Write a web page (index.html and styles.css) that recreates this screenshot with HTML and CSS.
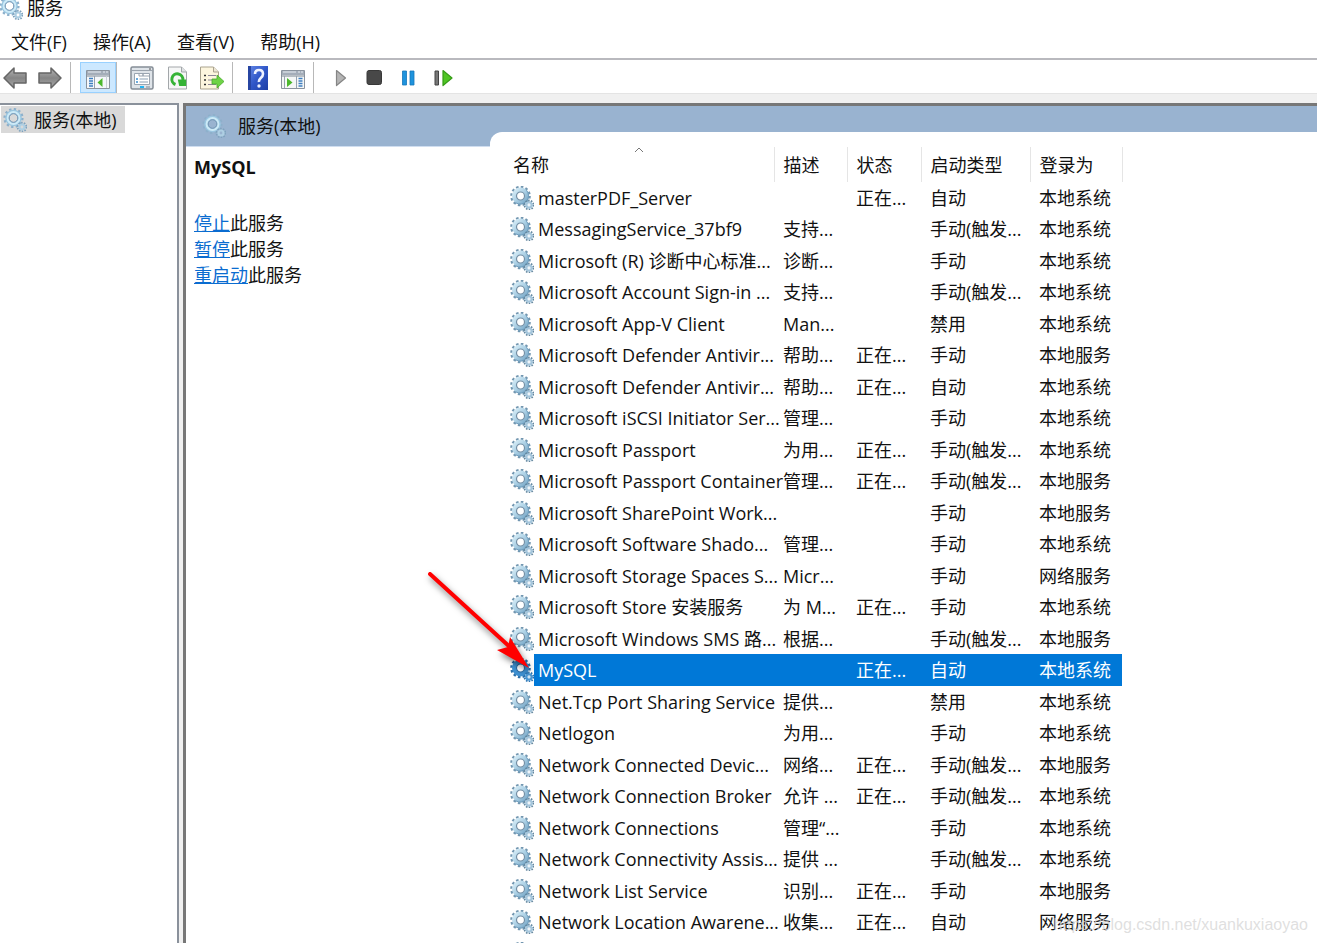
FILE: index.html
```html
<!DOCTYPE html>
<html lang="zh-CN">
<head>
<meta charset="utf-8">
<title>服务</title>
<link rel="stylesheet" href="styles.css">
</head>
<body>
<svg class="defs" aria-hidden="true">
  <defs>
    <linearGradient id="steel" x1="0" y1="0" x2="1" y2="1"><stop offset="0" stop-color="#d3eaf5"/><stop offset=".5" stop-color="#aacfe4"/><stop offset="1" stop-color="#7aa9c8"/></linearGradient>
    <linearGradient id="ash" x1="0" y1="0" x2="0" y2="1"><stop offset="0" stop-color="#b5b5b5"/><stop offset=".5" stop-color="#858585"/><stop offset="1" stop-color="#aaa"/></linearGradient>
    <linearGradient id="navy" x1="0" y1="0" x2="1" y2="1"><stop offset="0" stop-color="#6488e6"/><stop offset=".5" stop-color="#3057c8"/><stop offset="1" stop-color="#1d3fa4"/></linearGradient>
  </defs>
  <symbol id="gear" viewBox="0 0 24 24">
    <circle cx="10.500" cy="10" r="9" fill="none" stroke="#7296b0" stroke-width="2.600" stroke-dasharray="2.500 2.212"/>
    <circle cx="10.500" cy="10" r="6" fill="none" stroke="url(#steel)" stroke-width="5"/>
    <path d="M16.500 4.200a8.400 8.400 0 0 1-11 12.500" fill="none" stroke="#6f9dbd" stroke-width="1"/>
    <circle cx="10.500" cy="10" r="4" fill="#fff" stroke="#7590a6" stroke-width="1.200"/>
    <circle cx="19" cy="19" r="4.400" fill="none" stroke="#64879f" stroke-width="2" stroke-dasharray="1.500 1.264"/>
    <circle cx="19" cy="19" r="2.600" fill="none" stroke="#a5c6dc" stroke-width="2.400"/>
    <circle cx="19" cy="19" r="1.300" fill="#eef5fa"/>
  </symbol>
  <symbol id="gear-soft" viewBox="0 0 24 24">
    <circle cx="10.500" cy="10" r="8.800" fill="none" stroke="#8db0cb" stroke-width="2.600" stroke-dasharray="2.300 2.308"/>
    <circle cx="10.500" cy="10" r="6.300" fill="none" stroke="#9ac6e0" stroke-width="4"/>
    <circle cx="10.500" cy="10" r="5.900" fill="none" stroke="#cdeaf7" stroke-width="2"/>
    <circle cx="10.500" cy="10" r="4.300" fill="none" stroke="#7494b2" stroke-width="1"/>
    <circle cx="19" cy="19" r="4.300" fill="none" stroke="#7fa3be" stroke-width="2" stroke-dasharray="1.500 1.202"/>
    <circle cx="19" cy="19" r="2.500" fill="none" stroke="#aecfe3" stroke-width="2.200"/>
  </symbol>
  <symbol id="gear-selected" viewBox="0 0 24 24">
    <circle cx="10.500" cy="10" r="9" fill="none" stroke="#2a6ea8" stroke-width="2.600" stroke-dasharray="2.500 2.212"/>
    <circle cx="10.500" cy="10" r="6" fill="none" stroke="#3e8fcf" stroke-width="5"/>
    <circle cx="10.500" cy="10" r="4" fill="#fff" stroke="#2b6ca5" stroke-width="1.200"/>
    <circle cx="19" cy="19" r="4.400" fill="none" stroke="#2c74b2" stroke-width="2" stroke-dasharray="1.500 1.264"/>
    <circle cx="19" cy="19" r="2.600" fill="none" stroke="#4a97d3" stroke-width="2.400"/>
    <circle cx="19" cy="19" r="1.300" fill="#cfe4f4"/>
  </symbol>
</svg>

<header class="titlebar"><svg class="gear"><use href="#gear-soft"/></svg><span>服务</span></header>

<nav class="menubar">
  <button type="button">文件(F)</button>
  <button type="button">操作(A)</button>
  <button type="button">查看(V)</button>
  <button type="button">帮助(H)</button>
</nav>

<div class="toolbar" role="toolbar" aria-label="工具栏">
  <div class="group nav">
    <button type="button" aria-label="后退"><svg viewBox="0 0 24 24"><path d="M1 12 11 2v5h12v10H11v5z" fill="url(#ash)" stroke="#666" stroke-width="1.500" stroke-linejoin="round"/></svg></button>
    <button type="button" aria-label="前进"><svg viewBox="0 0 24 24"><path d="M23 12 13 2v5H1v10h12v5z" fill="url(#ash)" stroke="#666" stroke-width="1.500" stroke-linejoin="round"/></svg></button>
  </div>
  <div class="group tree-toggle">
    <button type="button" class="on" aria-label="显示控制台树" aria-pressed="true"><svg viewBox="0 0 24 24"><path d="M.5 4.500h23v18H.5z" fill="#f5f7fa" stroke="#8a939e"/><path d="M1 5h22v4H1z" fill="#a4adb9"/><path d="M2 6h13M17 6h2M20 6h2" stroke="#e8edf3"/><path d="M.5 10h23" stroke="#7b8591"/><path d="M3 12.500h4M3 15h4M3 17.500h4M3 20h4" stroke="#3f7fc1" stroke-width="1.300"/><path d="M8.500 10v12" stroke="#98a3af"/><path d="M16.500 12v9l-5-4.500z" fill="#4cb82d"/><path d="M20.500 10v12" stroke="#cbd1d8"/></svg></button>
  </div>
  <div class="group item-tools">
    <button type="button" aria-label="属性"><svg viewBox="0 0 24 24"><rect x="1" y="1" width="22" height="22" rx="1.500" fill="#dfe4e9" stroke="#858d96" stroke-width="1.500"/><path d="M2 4.500h20" stroke="#9ba4ae"/><path d="M19 3h2" stroke="#555"/><path d="M4.500 7.500h15v11h-15z" fill="#fff" stroke="#9aa5b1"/><path d="M9 7.500v2.500h4V7.500M13 10h6M13 7.500v2.500" fill="none" stroke="#9aa5b1"/><path d="M6 13h2M6 16h2" stroke="#3a8fd2" stroke-width="1.500"/><path d="M9.500 13H18M9.500 16H18" stroke="#8ba0b4"/><path d="M10 21h4" stroke="#22b4f2" stroke-width="2"/><path d="M16 21h4" stroke="#aeb7bf" stroke-width="2"/></svg></button>
    <button type="button" aria-label="刷新"><svg viewBox="0 0 24 24"><path d="M3.500 1h13l5 5v17h-18z" fill="#f6f7f7" stroke="#a3a7aa"/><path d="M16.500 1v5h5" fill="#dfe2e4" stroke="#a3a7aa"/><path d="M10.500 18.500A5.500 5.500 0 1 1 17.800 14" fill="none" stroke="#35b336" stroke-width="3"/><path d="M12.800 13.500h8.400v6.500h-7z" fill="#35b336"/></svg></button>
    <button type="button" aria-label="导出列表"><svg viewBox="0 0 24 24"><path d="M.5 1h13l5 5v17H.5z" fill="#fdf6df" stroke="#aaa38f"/><path d="M13.500 1v5h5" fill="#eee8d5" stroke="#aaa38f"/><path d="M4 9.500h2M4 14h2M4 18.500h2" stroke="#333" stroke-width="1.500"/><path d="M8 9.500h8M8 14h5M8 18.500h8" stroke="#8d8798"/><path d="M12 13h5V9l7 6.500-7 6.500v-4h-5z" fill="#6fd347" stroke="#48ab2b" stroke-width=".8"/></svg></button>
  </div>
  <div class="group help-tools">
    <button type="button" aria-label="帮助"><svg viewBox="0 0 24 24"><path d="M2 0h20v24H2z" fill="url(#navy)"/><path d="M2 0h3v24H2z" fill="#2745a2"/><path d="M9 8Q9 4 13 4t4 4q0 2-2.200 4T13 16" fill="none" stroke="#eef2ff" stroke-width="2.600"/><circle cx="13" cy="20" r="1.700" fill="#eef2ff"/></svg></button>
    <button type="button" aria-label="显示操作窗格"><svg viewBox="0 0 24 24"><path d="M.5 4.500h23v18H.5z" fill="#f5f7f7" stroke="#8a939e"/><path d="M1 5h22v4H1z" fill="#a4adb9"/><path d="M2 6h13M17 6h2M20 6h2" stroke="#e8edf3"/><path d="M.5 10h23" stroke="#7b8591"/><path d="M3.500 10v12M15.500 10v12" stroke="#98a3af"/><path d="M6 12v9l5.500-4.500z" fill="#4cb82d"/><path d="M17.500 12.500h4M17.500 15h4M17.500 17.500h4M17.500 20h4" stroke="#3f7fc1" stroke-width="1.300"/></svg></button>
  </div>
  <div class="group run-tools">
    <button type="button" aria-label="启动服务"><svg viewBox="0 0 24 24"><path d="M7.500 4.500 16.500 12l-9 7.500z" fill="#b4b4b4" stroke="#858585" stroke-width="1.200" stroke-linejoin="round"/></svg></button>
    <button type="button" aria-label="停止服务"><svg viewBox="0 0 24 24"><rect x="4" y="4.500" width="14.500" height="14" rx="2" fill="#484848" stroke="#383838"/></svg></button>
    <button type="button" aria-label="暂停服务"><svg viewBox="0 0 24 24"><path d="M5.500 5h4v14h-4zM13 5h4v14h-4z" fill="#1f93dd" stroke="#1676ba" stroke-width=".8"/></svg></button>
    <button type="button" aria-label="重新启动服务"><svg viewBox="0 0 24 24"><path d="M4 5h3.500v14H4z" fill="#777" stroke="#444"/><path d="M12 4.500 21 12l-9 7.500z" fill="#4fc523" stroke="#359c17" stroke-width="1.200" stroke-linejoin="round"/></svg></button>
  </div>
</div>

<div class="workspace">
  <aside class="tree"><a href="#services" class="tree-item"><svg class="gear"><use href="#gear-soft"/></svg><span>服务(本地)</span></a></aside>
  <main class="result" id="services">
    <section class="detail">
      <div class="detail-head"><svg class="gear"><use href="#gear-soft"/></svg><span>服务(本地)</span></div>
      <div class="detail-body">
        <h1>MySQL</h1>
        <p><a href="#stop">停止</a>此服务</p>
        <p><a href="#pause">暂停</a>此服务</p>
        <p><a href="#restart">重启动</a>此服务</p>
      </div>
    </section>
    <section class="list">
      <table>
        <colgroup><col class="c-name"><col class="c-desc"><col class="c-state"><col class="c-start"><col class="c-logon"></colgroup>
        <thead><tr><th class="sorted">名称<svg class="sort" viewBox="0 0 10 6"><path d="M1 5l4-4 4 4" fill="none" stroke="#777"/></svg></th><th>描述</th><th>状态</th><th>启动类型</th><th>登录为</th></tr></thead>
        <tbody>
          <tr><td><div class="name"><svg class="gear"><use href="#gear"/></svg><span>masterPDF_Server</span></div></td><td></td><td>正在...</td><td>自动</td><td>本地系统</td></tr>
          <tr><td><div class="name"><svg class="gear"><use href="#gear"/></svg><span>MessagingService_37bf9</span></div></td><td>支持...</td><td></td><td>手动(触发...</td><td>本地系统</td></tr>
          <tr><td><div class="name"><svg class="gear"><use href="#gear"/></svg><span>Microsoft (R) 诊断中心标准...</span></div></td><td>诊断...</td><td></td><td>手动</td><td>本地系统</td></tr>
          <tr><td><div class="name"><svg class="gear"><use href="#gear"/></svg><span>Microsoft Account Sign-in ...</span></div></td><td>支持...</td><td></td><td>手动(触发...</td><td>本地系统</td></tr>
          <tr><td><div class="name"><svg class="gear"><use href="#gear"/></svg><span>Microsoft App-V Client</span></div></td><td>Man...</td><td></td><td>禁用</td><td>本地系统</td></tr>
          <tr><td><div class="name"><svg class="gear"><use href="#gear"/></svg><span>Microsoft Defender Antivir...</span></div></td><td>帮助...</td><td>正在...</td><td>手动</td><td>本地服务</td></tr>
          <tr><td><div class="name"><svg class="gear"><use href="#gear"/></svg><span>Microsoft Defender Antivir...</span></div></td><td>帮助...</td><td>正在...</td><td>自动</td><td>本地系统</td></tr>
          <tr><td><div class="name"><svg class="gear"><use href="#gear"/></svg><span>Microsoft iSCSI Initiator Ser...</span></div></td><td>管理...</td><td></td><td>手动</td><td>本地系统</td></tr>
          <tr><td><div class="name"><svg class="gear"><use href="#gear"/></svg><span>Microsoft Passport</span></div></td><td>为用...</td><td>正在...</td><td>手动(触发...</td><td>本地系统</td></tr>
          <tr><td><div class="name"><svg class="gear"><use href="#gear"/></svg><span>Microsoft Passport Container</span></div></td><td>管理...</td><td>正在...</td><td>手动(触发...</td><td>本地服务</td></tr>
          <tr><td><div class="name"><svg class="gear"><use href="#gear"/></svg><span>Microsoft SharePoint Work...</span></div></td><td></td><td></td><td>手动</td><td>本地服务</td></tr>
          <tr><td><div class="name"><svg class="gear"><use href="#gear"/></svg><span>Microsoft Software Shado...</span></div></td><td>管理...</td><td></td><td>手动</td><td>本地系统</td></tr>
          <tr><td><div class="name"><svg class="gear"><use href="#gear"/></svg><span>Microsoft Storage Spaces S...</span></div></td><td>Micr...</td><td></td><td>手动</td><td>网络服务</td></tr>
          <tr><td><div class="name"><svg class="gear"><use href="#gear"/></svg><span>Microsoft Store 安装服务</span></div></td><td>为 M...</td><td>正在...</td><td>手动</td><td>本地系统</td></tr>
          <tr><td><div class="name"><svg class="gear"><use href="#gear"/></svg><span>Microsoft Windows SMS 路...</span></div></td><td>根据...</td><td></td><td>手动(触发...</td><td>本地服务</td></tr>
          <tr class="selected"><td><div class="name"><svg class="gear"><use href="#gear-selected"/></svg><span>MySQL</span></div></td><td></td><td>正在...</td><td>自动</td><td>本地系统</td></tr>
          <tr><td><div class="name"><svg class="gear"><use href="#gear"/></svg><span>Net.Tcp Port Sharing Service</span></div></td><td>提供...</td><td></td><td>禁用</td><td>本地系统</td></tr>
          <tr><td><div class="name"><svg class="gear"><use href="#gear"/></svg><span>Netlogon</span></div></td><td>为用...</td><td></td><td>手动</td><td>本地系统</td></tr>
          <tr><td><div class="name"><svg class="gear"><use href="#gear"/></svg><span>Network Connected Devic...</span></div></td><td>网络...</td><td>正在...</td><td>手动(触发...</td><td>本地服务</td></tr>
          <tr><td><div class="name"><svg class="gear"><use href="#gear"/></svg><span>Network Connection Broker</span></div></td><td>允许 ...</td><td>正在...</td><td>手动(触发...</td><td>本地系统</td></tr>
          <tr><td><div class="name"><svg class="gear"><use href="#gear"/></svg><span>Network Connections</span></div></td><td>管理“...</td><td></td><td>手动</td><td>本地系统</td></tr>
          <tr><td><div class="name"><svg class="gear"><use href="#gear"/></svg><span>Network Connectivity Assis...</span></div></td><td>提供 ...</td><td></td><td>手动(触发...</td><td>本地系统</td></tr>
          <tr><td><div class="name"><svg class="gear"><use href="#gear"/></svg><span>Network List Service</span></div></td><td>识别...</td><td>正在...</td><td>手动</td><td>本地服务</td></tr>
          <tr><td><div class="name"><svg class="gear"><use href="#gear"/></svg><span>Network Location Awarene...</span></div></td><td>收集...</td><td>正在...</td><td>自动</td><td>网络服务</td></tr>
          <tr><td><div class="name"><svg class="gear"><use href="#gear"/></svg></div></td><td></td><td></td><td></td><td></td></tr>
        </tbody>
      </table>
    </section>
  </main>
</div>

<svg class="pointer" viewBox="0 0 120 110" aria-hidden="true"><path d="M10 12 91 86" stroke="red" stroke-width="4" stroke-linecap="round"/><path d="M109 106 90 75 88 85 77 88z" fill="red"/></svg>
<div class="watermark">https://blog.csdn.net/xuankuxiaoyao</div>
</body>
</html>
```
FILE: styles.css
```css
* { box-sizing: border-box; }

body {
  margin: 0;
  height: 100vh;
  display: flex;
  flex-direction: column;
  overflow: hidden;
  position: relative;
  background: #fff;
  color: #111;
  font: 18px/24px "Open Sans", "Noto Sans CJK SC", sans-serif;
}

button {
  border: 0;
  padding: 0;
  background: none;
  color: inherit;
  font: inherit;
}

.defs { position: absolute; width: 0; height: 0; }
.gear { flex: none; display: block; width: 24px; height: 24px; }

/* Title and menus */
.titlebar {
  flex: none;
  height: 16px;
  display: flex;
  align-items: center;
  gap: 4px;
  margin-left: -1px;
}

.menubar {
  flex: none;
  display: flex;
  gap: 26px;
  margin-top: 10px;
  padding: 4px 11px;
}

/* Toolbar */
.toolbar {
  flex: none;
  display: flex;
  height: 36px;
  border-top: 2px solid #b9b9be;
  border-bottom: 1px solid #e4e4e4;
}

.toolbar svg { display: block; width: 24px; height: 24px; }
.group { display: flex; gap: 5px; border-right: 1px solid #b8b8b8; margin-top: 2px; }
.group button { width: 30px; display: flex; align-items: center; justify-content: center; }
.nav { padding-right: 5px; }
.tree-toggle { padding-left: 9px; }
.group .on { width: 36px; background: #cce8ff; border: 1px solid #99d1ff; }
.item-tools, .help-tools { padding: 0 5px 0 10px; }
.run-tools { gap: 4px; padding-left: 12px; border-right: 0; }

/* Panes */
.workspace {
  flex: 1;
  min-height: 0;
  display: flex;
  gap: 4px;
  padding-top: 9px;
  background: #f0f0f0;
}

.tree {
  flex: none;
  width: 179px;
  padding: 1px;
  background: #fff;
  border-top: 2px solid #8a919b;
  border-right: 2px solid #8a919b;
}

.tree-item {
  display: flex;
  align-items: center;
  gap: 7px;
  width: 124px;
  height: 27px;
  padding-left: 2px;
  background: #d9d9d9;
  color: inherit;
  text-decoration: none;
  white-space: nowrap;
}

.result {
  flex: 1;
  min-width: 0;
  display: flex;
  overflow: hidden;
  background: #99b3d0;
  border-top: 3px solid #777;
  border-left: 3px solid #777;
}

.detail { flex: none; width: 304px; display: flex; flex-direction: column; }
.detail-head { height: 40px; display: flex; align-items: center; gap: 12px; padding-left: 16px; }
.detail-body { flex: 1; padding: 8px; background: #fff; border-top: 1px solid #d0def0; }
.detail-body h1 { margin: 0 0 31px; font-size: 18px; line-height: 24px; }
.detail-body p { margin: 0; line-height: 26px; }
.detail-body a { color: #0a6cd0; }

.list {
  flex: 1;
  min-width: 0;
  margin-top: 26px;
  padding: 15px 0 0 14px;
  background: #fff;
  border-top-left-radius: 12px;
}

/* Service table */
table { table-layout: fixed; width: 618px; border-collapse: collapse; }
.c-name { width: 270px; }
.c-desc { width: 73px; }
.c-state { width: 74px; }
.c-start { width: 109px; }
.c-logon { width: 92px; }

th {
  height: 35px;
  padding: 0 0 0 9px;
  border-right: 1px solid #e5e5e5;
  font-weight: 400;
  text-align: left;
  white-space: nowrap;
}

.sorted { position: relative; }
.sort { position: absolute; top: 0; left: 130px; width: 10px; height: 6px; }

td { height: 31px; padding: 0 0 0 9px; white-space: nowrap; }
tr:nth-child(even) td { height: 32px; }
td:first-child { padding-left: 6px; }
.name { display: flex; align-items: center; height: 30px; }
.name span { flex: 1; padding-left: 4px; }

.selected td { background: #0078d7; color: #fff; }
.selected td:first-child { background: none; }
.selected .name { height: 32px; }
.selected .name span { background: #0078d7; line-height: 32px; }

/* Annotation over the list */
.pointer {
  position: absolute;
  left: 420px;
  top: 562px;
  width: 120px;
  height: 110px;
  filter: drop-shadow(2px 4px 3px rgba(0, 0, 0, .5));
}

.watermark {
  position: absolute;
  right: 9px;
  bottom: 6px;
  color: rgba(215, 215, 215, .8);
  font: 16px/24px "Liberation Sans", Arial, sans-serif;
}
```
